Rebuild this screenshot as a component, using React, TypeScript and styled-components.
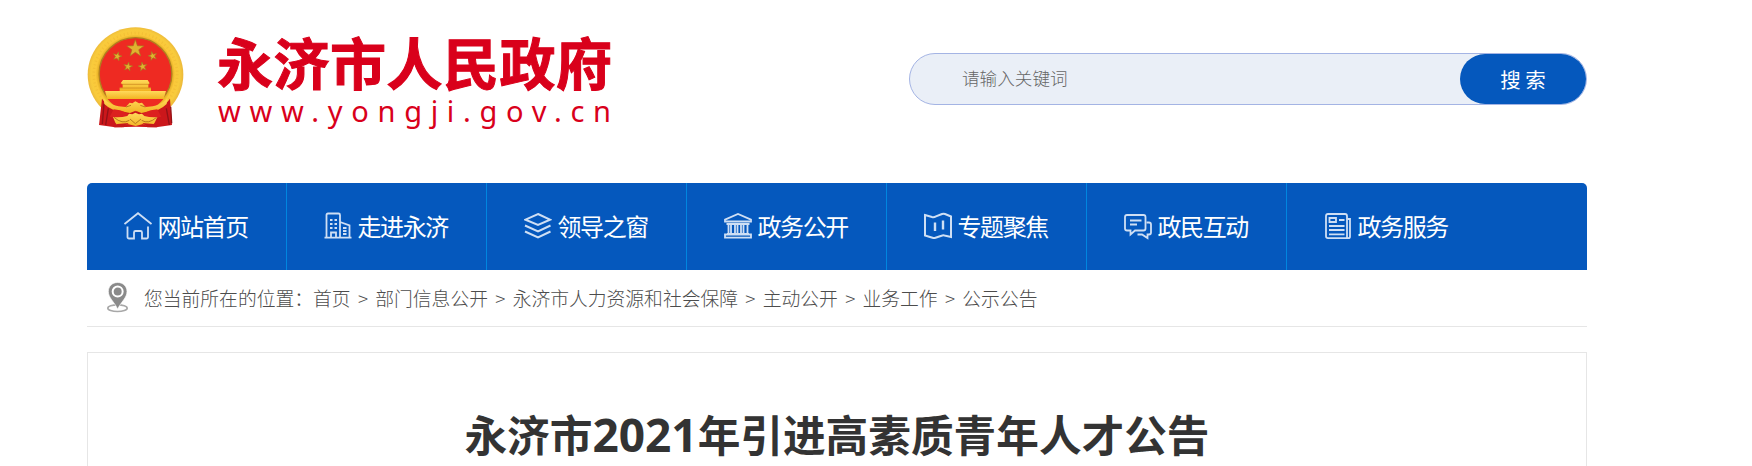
import React from 'react'
import styled, { createGlobalStyle } from 'styled-components'

const sans = `'Noto Sans CJK SC', 'Noto Sans', sans-serif`

type NavEntry = {
  label: string
  icon: React.ReactNode
}

const NAV: NavEntry[] = [
  {
    label: '网站首页',
    icon: (
      <>
        <path d="M0.500 12 14 1.200 27.500 12" />
        <path d="M3.500 14.500v10.500a1.500 1.500 0 0 0 1.500 1.500H10V20.500q0-1.500 1.500-1.500h5q1.500 0 1.500 1.500v6h4.500a1.500 1.500 0 0 0 1.500-1.500V14.500" />
      </>
    ),
  },
  {
    label: '走进永济',
    icon: (
      <>
        <path d="M2.500 25.500V3q0-1.500 1.500-1.500h10.500q1.500 0 1.500 1.500v22.500M16 10l9.500 3.500v12M0.500 25.700h27" />
        <path d="M7 25v-4.500h5V25M6 8h2.500M10.500 8H13M6 12h2.500M10.500 12H13M6 16h2.500M10.500 16H13M19 16h3.500M19 19h3.500M19 22h3.500" />
      </>
    ),
  },
  {
    label: '领导之窗',
    icon: (
      <>
        <path strokeWidth="2" d="M14 2 26 7.700 14 13 1.500 7.700z" />
        <path strokeWidth="2" d="M1 13.500 14 19.500 26.500 13.500M1 19.500 14 25.500 26.500 19.500" />
      </>
    ),
  },
  {
    label: '政务公开',
    icon: (
      <>
        <path d="M1 9.500V7.700L14 2 27 7.700v1.800zM2.500 12h23M3 22h22M1 22.500v3.200h26v-3.200z" />
        <path d="M4.500 12v9.500M7 12v9.500M11 12v9.500M13.500 12v9.500M17 12v9.500M19.500 12v9.500M23.500 12v9.500" />
      </>
    ),
  },
  {
    label: '专题聚焦',
    icon: (
      <>
        <path
          strokeWidth="2"
          d="M1 3 8 5q2 .5 4-.6L18 2q1.500-.6 3 0l6 2.500V25l-6.500-1.500q-1.500-.4-3 .2l-6 2q-1.500.500-3 0L1 23.500z"
        />
        <path strokeWidth="2.400" d="M11 10.500V19M19 8.500v9" />
      </>
    ),
  },
  {
    label: '政民互动',
    icon: (
      <>
        <path d="M3 3h16.500q2 0 2 2v11.500q0 2-2 2H11L6.500 22.500V18.500H3q-2 0-2-2V5q0-2 2-2z" />
        <path d="M6 8.500h11.500M6 12.500h7" />
        <path d="M22.500 10.500H25q2 0 2 2v8q0 2-2 2h-1.500v3.500L18 22.500h-4.500" />
      </>
    ),
  },
  {
    label: '政务服务',
    icon: (
      <>
        <path d="M4 2h17q2 0 2 2v21.500q0 .7 1 .7H4q-2 0-2-2V4q0-2 2-2z" />
        <path d="M23.500 7H26v17.500q0 1.700-1.700 1.700H22" />
        <path d="M5.500 6h6.500v4H5.500zM15 8h5.500M5 14h15.500M5 18h15.500M5 22.300h15.500" />
      </>
    ),
  },
]

const CRUMBS = ['首页', '部门信息公开', '永济市人力资源和社会保障', '主动公开', '业务工作', '公示公告']

// five-pointed star outline around a centre
function star(cx: number, cy: number, r: number, turn = 0) {
  return Array.from({ length: 10 }, (_, i) => {
    const radius = i % 2 ? r * 0.4 : r
    const a = ((i * 36 - 90 + turn) * Math.PI) / 180
    return `${(cx + radius * Math.cos(a)).toFixed(1)},${(cy + radius * Math.sin(a)).toFixed(1)}`
  }).join(' ')
}

function Emblem() {
  return (
    <EmblemSvg viewBox="0 0 291 306" aria-hidden>
      <defs>
        <radialGradient id="gold" gradientUnits="userSpaceOnUse" cx="145" cy="142" r="145">
          <stop offset="0.74" stopColor="#d9a21c" />
          <stop offset="0.82" stopColor="#fbc93a" />
          <stop offset="0.92" stopColor="#f8cb3c" />
          <stop offset="1" stopColor="#eab63a" />
        </radialGradient>
        <linearGradient id="plate" x1="0" y1="0" x2="0" y2="1">
          <stop offset="0" stopColor="#ffd95a" />
          <stop offset="1" stopColor="#f2b322" />
        </linearGradient>
      </defs>
      <ellipse cx="145.500" cy="143" rx="143.500" ry="142" fill="url(#gold)" />
      <ellipse
        cx="145.500"
        cy="142"
        rx="125"
        ry="124"
        fill="none"
        stroke="#dfa42c"
        strokeWidth="8"
        strokeDasharray="3 8"
        opacity="0.250"
      />
      <circle cx="145.500" cy="141" r="109" fill="#ee2a22" stroke="#b07d20" strokeWidth="4" />
      <g fill="#e0b32f" stroke="#a87420" strokeWidth="2">
        <polygon points={star(145, 65, 27)} />
        <polygon points={star(91, 88, 14, 15)} />
        <polygon points={star(197, 87, 14, -15)} />
        <polygon points={star(123, 119, 14, 10)} />
        <polygon points={star(167, 119, 14, -10)} />
      </g>
      <path d="M108 159h74l6 10-4 3v10h8v10H98v-10h9v-10l-6-3z" fill="url(#plate)" />
      <path d="M104 172h82M98 183h94" stroke="#c7801b" strokeWidth="2" />
      <path d="M54 192h183l-7 24H61z" fill="url(#plate)" />
      <path d="M62 216h167q-27 36-83 36T62 216z" fill="#ee2a22" />
      <path d="M45 215q14 23 48 28l54 10 54-10q34-5 48-28l6 79-48 7-60-2-62 2-49-7z" fill="#cb171b" />
      <path d="M51 230l-5 61M64 244l-8 50M238 244l9 50M251 239l3 50" stroke="#921217" strokeWidth="4" fill="none" />
      <path
        d="M50 215q20 23 66 25l12-13 8 2 9-6 11 6 9-2 11 13q46-2 65-25l-2 16q-24 24-58 23l-18 4-17-7-17 7-19-4q-36-1-58-23z"
        fill="url(#plate)"
      />
      <path d="M80 247q40 4 65 30 25-26 66-30l12 22q-48 12-78 17-30-5-77-17z" fill="#dc211f" />
      <path
        d="M78 270q24 2 43-3l5-7 10 2 9-5 11 5 9-2 7 7q20 5 39 3l-8 17q-8 12-18 13l-17-9-22 6-24-6-19 10q-12-3-18-14z"
        fill="url(#plate)"
      />
      <path d="M81 271q25 22 46 9M209 271q-25 22-45 9M129 276l16 14 17-14M117 240l15-5M175 240l-15-5" stroke="#b9771d" strokeWidth="3" fill="none" />
      <path d="M91 291l34-3-15 13H80zM200 291l-34-3 15 13h30z" fill="#c5191c" />
    </EmblemSvg>
  )
}

function PinIcon() {
  return (
    <Pin viewBox="0 0 63 92" aria-hidden>
      <ellipse cx="31.500" cy="78" rx="29" ry="10" fill="none" stroke="#a8a8a8" strokeWidth="5" />
      <path
        d="M32 1C15 1 4 13 4 28c0 19 18 31 28 53C42 59 60 47 60 28 60 13 49 1 32 1z"
        fill="#8a8a8a"
        stroke="#fff"
        strokeWidth="2"
      />
      <circle cx="32" cy="28" r="15" fill="none" stroke="#fff" strokeWidth="6" />
    </Pin>
  )
}

export default function App() {
  return (
    <>
      <GlobalStyle />
      <Page>
        <Header>
          <Emblem />
          <Brand>
            <Brand.Name>永济市人民政府</Brand.Name>
            <Brand.Url>www.yongji.gov.cn</Brand.Url>
          </Brand>
          <Search onSubmit={(e) => e.preventDefault()}>
            <SearchInput placeholder="请输入关键词" />
            <SearchButton>搜 索</SearchButton>
          </Search>
        </Header>
        <Nav>
          {NAV.map((item, i) => (
            <NavItem key={item.label} $last={i === NAV.length - 1}>
              <NavIcon viewBox="0 0 28 28" aria-hidden>
                {item.icon}
              </NavIcon>
              {item.label}
            </NavItem>
          ))}
        </Nav>
        <Breadcrumb>
          <PinIcon />
          <span>您当前所在的位置：</span>
          {CRUMBS.map((crumb, i) => (
            <React.Fragment key={crumb}>
              {i > 0 && <Separator>&gt;</Separator>}
              <span>{crumb}</span>
            </React.Fragment>
          ))}
        </Breadcrumb>
        <Article>
          <Title>
            永济市<Digits>2021</Digits>年引进高素质青年人才公告
          </Title>
        </Article>
      </Page>
    </>
  )
}

const GlobalStyle = createGlobalStyle`
  * {
    box-sizing: border-box;
  }
  body {
    margin: 0;
    background: #fff;
    font-family: ${sans};
    overflow: hidden;
  }
`

const Page = styled.div`
  width: 1500px;
  height: 466px;
  margin-left: 87px;
  overflow: hidden;
`

const Header = styled.header`
  display: flex;
  align-items: flex-start;
  height: 183px;
  padding-top: 27px;
`

const EmblemSvg = styled.svg`
  width: 97px;
  height: 102px;
  flex-shrink: 0;
`

const Brand = styled.div`
  width: 420px;
  margin-left: 33px;
  color: #d9001b;
  white-space: nowrap;
`
Brand.Name = styled.div`
  height: 69px;
  font-size: 56px;
  line-height: 67px;
  font-weight: 700;
  letter-spacing: 0.500px;
  -webkit-text-stroke: 1px #d9001b;
`
Brand.Url = styled.div`
  padding-left: 1px;
  font-family: 'Noto Sans', sans-serif;
  font-size: 29px;
  line-height: 30px;
  letter-spacing: 8.700px;
`

const Search = styled.form`
  display: flex;
  width: 678px;
  height: 52px;
  margin: 26px 0 0 auto;
  border: 1px solid #a4b4e4;
  border-radius: 26px;
  background: #eaeff7;
`

const SearchInput = styled.input`
  flex: 1;
  min-width: 0;
  padding: 0 0 3px 52px;
  border: 0;
  outline: 0;
  background: transparent;
  font-family: ${sans};
  font-size: 17.600px;
  font-weight: 300;

  &::placeholder {
    color: #666;
  }
`

const SearchButton = styled.button`
  width: 126px;
  padding: 0 0 1px;
  border: 0;
  border-radius: 25px;
  background: #0558bd;
  color: #fff;
  font-family: ${sans};
  font-size: 20.500px;
`

const Nav = styled.nav`
  display: flex;
  height: 87px;
  border-radius: 5px 5px 0 0;
  background: #0558bd;
`

const NavItem = styled.a<{ $last: boolean }>`
  display: flex;
  align-items: center;
  width: 200px;
  padding: 0 0 2px 37px;
  border-right: ${(props) => (props.$last ? 0 : '1px solid #0086e0')};
  color: #fff;
  font-size: 24px;
  letter-spacing: -1.400px;
  white-space: nowrap;
`

const NavIcon = styled.svg`
  width: 28px;
  height: 28px;
  margin-right: 5.500px;
  fill: none;
  stroke: #cfdff4;
  stroke-width: 1.800;
`

const Breadcrumb = styled.div`
  display: flex;
  align-items: center;
  height: 57px;
  padding: 0 0 2px 20px;
  border-bottom: 1px solid #e6e6e6;
  color: #4c4c4c;
  font-size: 18.800px;
  font-weight: 300;
  white-space: nowrap;
`

const Pin = styled.svg`
  width: 21px;
  height: 31px;
  margin-right: 16px;
`

const Separator = styled.span`
  width: 24.700px;
  text-align: center;
`

const Article = styled.main`
  height: 140px;
  margin-top: 25px;
  padding-top: 51px;
  border: 1px solid #e6e6e6;
`

const Title = styled.h1`
  margin: 0;
  color: #333;
  font-size: 42.670px;
  line-height: 60px;
  font-weight: 700;
  text-align: center;
  white-space: nowrap;
`

const Digits = styled.span`
  font-family: 'Open Sans', sans-serif;
  font-size: 46px;
  font-weight: 700;
  line-height: 1;
`
